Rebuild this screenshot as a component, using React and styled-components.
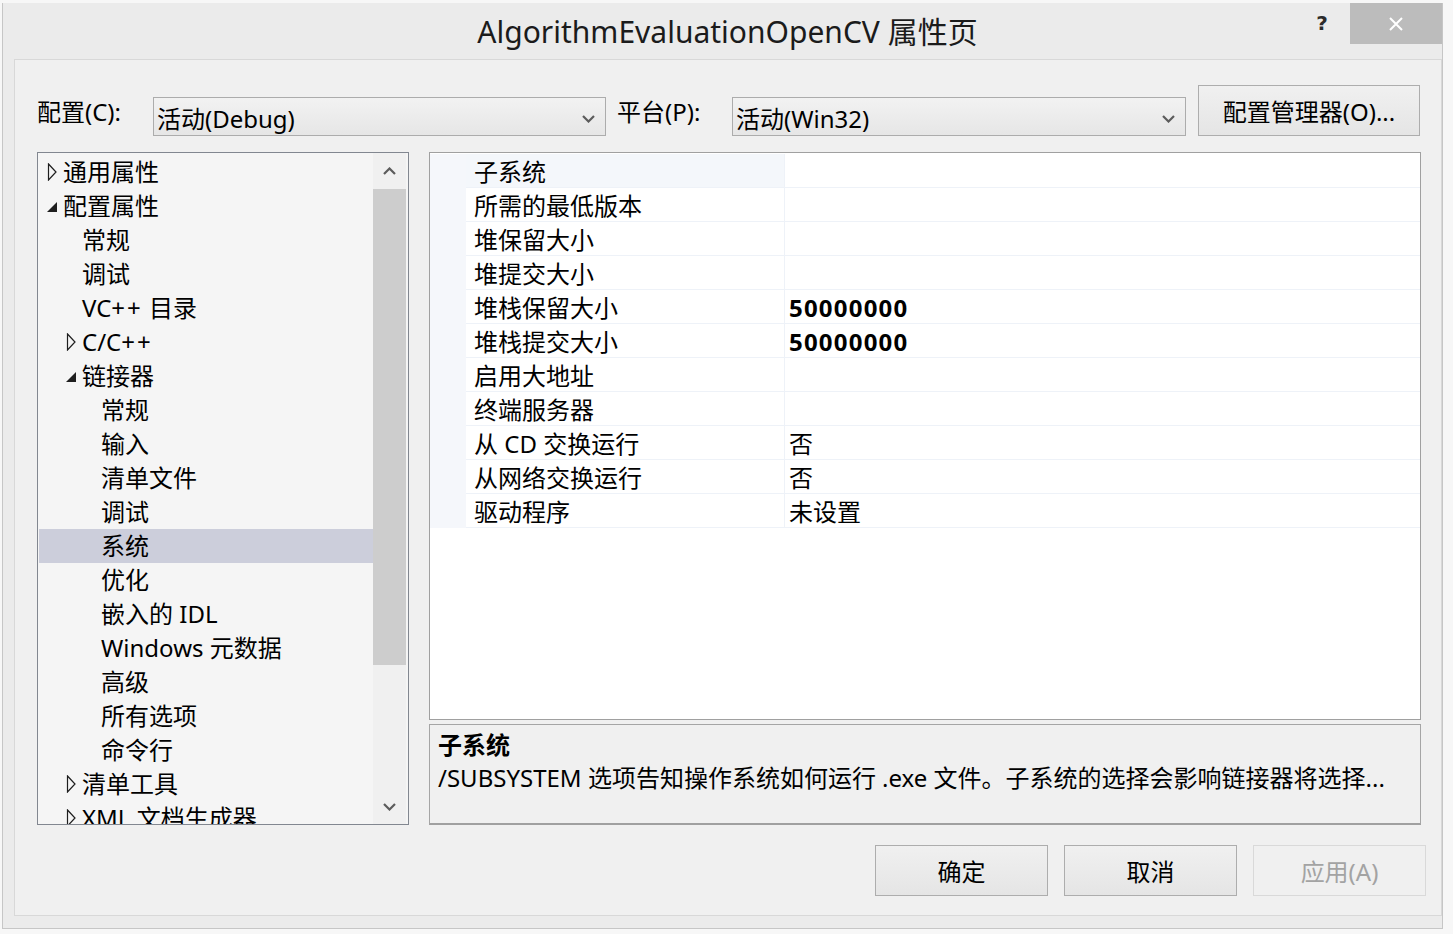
import React from "react"
import styled, { createGlobalStyle } from "styled-components"

const GlobalStyle = createGlobalStyle`
  html, body {
    margin: 0;
    padding: 0;
    background: #f7f7f7;
  }
  body {
    font-family: "Noto Sans", "Noto Sans CJK SC", sans-serif;
    color: #000;
  }
  * {
    box-sizing: border-box;
  }
`

const Page = styled.div`
  width: 1453px;
  height: 934px;
  padding: 3px 0 0 2px;
  overflow: hidden;
`

const Dialog = styled.div`
  width: 1441px;
  height: 926px;
  background: #ebebeb;
  border: 1px solid #c6c6c6;
  border-top: none;
  display: flex;
  flex-direction: column;
`

const TitleBar = styled.div`
  height: 56px;
  display: grid;
  grid-template-columns: 1fr auto 1fr;
  padding-left: 10px;
`

const Title = styled.div`
  grid-column: 2;
  font-size: 30px;
  line-height: 58px;
  color: #1b1b1b;
  white-space: nowrap;
`

const WindowControls = styled.div`
  grid-column: 3;
  display: flex;
  justify-content: flex-end;
  align-items: flex-start;
`

const HelpButton = styled.div`
  width: 40px;
  height: 41px;
  font-family: "DejaVu Sans", sans-serif;
  font-weight: bold;
  font-size: 20px;
  line-height: 41px;
  text-align: center;
  color: #2b2b2b;
  margin-right: 8px;
`

const CloseButton = styled.div`
  width: 92px;
  height: 41px;
  background: #bcbcbc;
  display: flex;
  align-items: center;
  justify-content: center;
`

const Body = styled.div`
  flex: 1;
  margin: 0 0 12px 11px;
  background: #f0f0f0;
  border: 1px solid #d8d8d8;
  padding: 25px 19px 17px 22px;
  display: flex;
  flex-direction: column;
`

const ConfigRow = styled.div`
  height: 51px;
  display: flex;
  align-items: flex-end;
`

const Label = styled.div`
  width: ${(p) => p.$width}px;
  margin-left: ${(p) => p.$offset || 0}px;
  font-size: 24px;
  line-height: 34px;
  padding-bottom: 7px;
  white-space: nowrap;
`

const Combo = styled.div`
  width: ${(p) => p.$width}px;
  height: 39px;
  border: 1px solid #acacac;
  background: linear-gradient(#f2f2f2, #e6e6e6);
  display: flex;
  align-items: center;
  justify-content: space-between;
  padding: 4px 10px 0 3px;
  font-size: 24px;
  line-height: 34px;
`

const Button = styled.div`
  width: ${(p) => p.$width || 173}px;
  height: 51px;
  margin-left: ${(p) => p.$offset || 0}px;
  border: 1px solid ${(p) => (p.$disabled ? "#d9d9d9" : "#adadad")};
  background: ${(p) => (p.$disabled ? "#f0f0f0" : "linear-gradient(#f0f0f0, #e5e5e5)")};
  color: ${(p) => (p.$disabled ? "#a3a3a3" : "#000")};
  font-size: 24px;
  line-height: 51px;
  text-align: center;
  white-space: nowrap;
`

const Main = styled.div`
  margin-top: 16px;
  height: 673px;
  display: flex;
  gap: 20px;
`

const Tree = styled.div`
  width: 372px;
  border: 1px solid #828790;
  background: #f5f5f5;
  display: flex;
`

const TreeList = styled.div`
  flex: 1;
  padding: 2px 0 0 1px;
  overflow: hidden;
`

const TreeRow = styled.div`
  height: 34px;
  display: flex;
  align-items: center;
  padding-left: ${(p) => 8 + p.$level * 19}px;
  background: ${(p) => (p.$selected ? "#cccedb" : "transparent")};
  font-size: 24px;
  line-height: 36px;
  white-space: pre;
`

const Toggle = styled.span`
  width: 16px;
  height: 34px;
  display: flex;
  align-items: center;
  flex-shrink: 0;
`

const Wide = styled.span`
  letter-spacing: 2px;
`

const Scrollbar = styled.div`
  width: 33px;
  margin-right: 2px;
  background: #f0f0f0;
  display: flex;
  flex-direction: column;
`

const ScrollArrow = styled.div`
  height: 35px;
  display: flex;
  align-items: center;
  justify-content: center;
`

const ScrollTrack = styled.div`
  flex: 1;
  display: flex;
  flex-direction: column;
`

const Thumb = styled.div`
  height: 476px;
  margin-top: 1px;
  background: #cdcdcd;
`

const Pane = styled.div`
  width: 992px;
  display: flex;
  flex-direction: column;
  gap: 4px;
`

const Grid = styled.div`
  height: 568px;
  border: 1px solid #a0a0a0;
  background: #fff;
  display: flex;
  flex-direction: column;
  padding-top: 1px;
`

const GridRow = styled.div`
  height: 34px;
  display: grid;
  grid-template-columns: 36px 319px 1fr;
`

const Margin = styled.div`
  background: #f5f7fb;
`

const Cell = styled.div`
  border-bottom: 1px solid #eef2f8;
  border-right: ${(p) => (p.$name ? "1px solid #eef2f8" : "none")};
  background: ${(p) => (p.$selected ? "#f4f7fb" : "transparent")};
  padding: 2px 0 0 ${(p) => (p.$name ? 8 : 4)}px;
  font-size: 24px;
  line-height: 32px;
  font-weight: ${(p) => (p.$bold ? 700 : 400)};
  letter-spacing: ${(p) => (p.$bold ? "1.2px" : "0")};
  white-space: nowrap;
  overflow: hidden;
`

const Description = styled.div`
  height: 101px;
  background: #f0f0f0;
  border: 1px solid #a5a5a5;
  border-bottom: 2px solid #a0a0a0;
  padding: 3px 8px;
  font-size: 24px;
  line-height: 33px;
  white-space: nowrap;
  overflow: hidden;
`

const DescTitle = styled.div`
  font-weight: 700;
`

const ButtonRow = styled.div`
  margin-top: 20px;
  margin-right: -4px;
  display: flex;
  justify-content: flex-end;
  gap: 16px;
`

const Chevron = ({ up, color = "#5c5c5c" }) => (
  <svg width="13" height="8" viewBox="0 0 13 8">
    <polyline
      points={up ? "1,7 6.5,1.5 12,7" : "1,1 6.5,6.5 12,1"}
      fill="none"
      stroke={color}
      strokeWidth="2.2"
    />
  </svg>
)

const Triangle = ({ open }) =>
  open ? (
    <svg width="11" height="16" viewBox="0 0 11 16">
      <polygon points="10,4 10,14 0,14" fill="#1e1e1e" />
    </svg>
  ) : (
    <svg width="11" height="18" viewBox="0 0 11 18">
      <polygon points="1.5,1 9,9 1.5,17" fill="none" stroke="#1e1e1e" strokeWidth="1.2" />
    </svg>
  )

const treeItems = [
  { level: 0, label: "通用属性", toggle: "closed" },
  { level: 0, label: "配置属性", toggle: "open" },
  { level: 1, label: "常规" },
  { level: 1, label: "调试" },
  { level: 1, label: <span>VC<Wide>++</Wide>{" 目录"}</span> },
  { level: 1, label: <span>C/C<Wide>++</Wide></span>, toggle: "closed" },
  { level: 1, label: "链接器", toggle: "open" },
  { level: 2, label: "常规" },
  { level: 2, label: "输入" },
  { level: 2, label: "清单文件" },
  { level: 2, label: "调试" },
  { level: 2, label: "系统", selected: true },
  { level: 2, label: "优化" },
  { level: 2, label: "嵌入的 IDL" },
  { level: 2, label: "Windows 元数据" },
  { level: 2, label: "高级" },
  { level: 2, label: "所有选项" },
  { level: 2, label: "命令行" },
  { level: 1, label: "清单工具", toggle: "closed" },
  { level: 1, label: "XML 文档生成器", toggle: "closed" },
]

const properties = [
  { name: "子系统", value: "", selected: true },
  { name: "所需的最低版本", value: "" },
  { name: "堆保留大小", value: "" },
  { name: "堆提交大小", value: "" },
  { name: "堆栈保留大小", value: "50000000", bold: true },
  { name: "堆栈提交大小", value: "50000000", bold: true },
  { name: "启用大地址", value: "" },
  { name: "终端服务器", value: "" },
  { name: "从 CD 交换运行", value: "否" },
  { name: "从网络交换运行", value: "否" },
  { name: "驱动程序", value: "未设置" },
]

function App() {
  return (
    <Page>
      <GlobalStyle />
      <Dialog>
        <TitleBar>
          <Title>AlgorithmEvaluationOpenCV 属性页</Title>
          <WindowControls>
            <HelpButton>?</HelpButton>
            <CloseButton>
              <svg width="16" height="16" viewBox="0 0 16 16">
                <path d="M2 2 L14 14 M14 2 L2 14" stroke="#fff" strokeWidth="2" />
              </svg>
            </CloseButton>
          </WindowControls>
        </TitleBar>

        <Body>
          <ConfigRow>
            <Label $width={116}>配置(C):</Label>
            <Combo $width={453}>
              <span>活动(Debug)</span>
              <Chevron />
            </Combo>
            <Label $width={115} $offset={11}>平台(P):</Label>
            <Combo $width={454}>
              <span>活动(Win32)</span>
              <Chevron />
            </Combo>
            <Button $width={222} $offset={12}>配置管理器(O)...</Button>
          </ConfigRow>

          <Main>
            <Tree>
              <TreeList>
                {treeItems.map((item, i) => (
                  <TreeRow key={i} $level={item.level} $selected={item.selected}>
                    <Toggle>{item.toggle && <Triangle open={item.toggle === "open"} />}</Toggle>
                    {item.label}
                  </TreeRow>
                ))}
              </TreeList>
              <Scrollbar>
                <ScrollArrow>
                  <Chevron up />
                </ScrollArrow>
                <ScrollTrack>
                  <Thumb />
                </ScrollTrack>
                <ScrollArrow>
                  <Chevron />
                </ScrollArrow>
              </Scrollbar>
            </Tree>

            <Pane>
              <Grid>
                {properties.map((p, i) => (
                  <GridRow key={i}>
                    <Margin />
                    <Cell $name $selected={p.selected}>{p.name}</Cell>
                    <Cell $bold={p.bold}>{p.value}</Cell>
                  </GridRow>
                ))}
              </Grid>
              <Description>
                <DescTitle>子系统</DescTitle>
                <div>/SUBSYSTEM 选项告知操作系统如何运行 .exe 文件。子系统的选择会影响链接器将选择...</div>
              </Description>
            </Pane>
          </Main>

          <ButtonRow>
            <Button>确定</Button>
            <Button>取消</Button>
            <Button $disabled>应用(A)</Button>
          </ButtonRow>
        </Body>
      </Dialog>
    </Page>
  )
}

export default App
